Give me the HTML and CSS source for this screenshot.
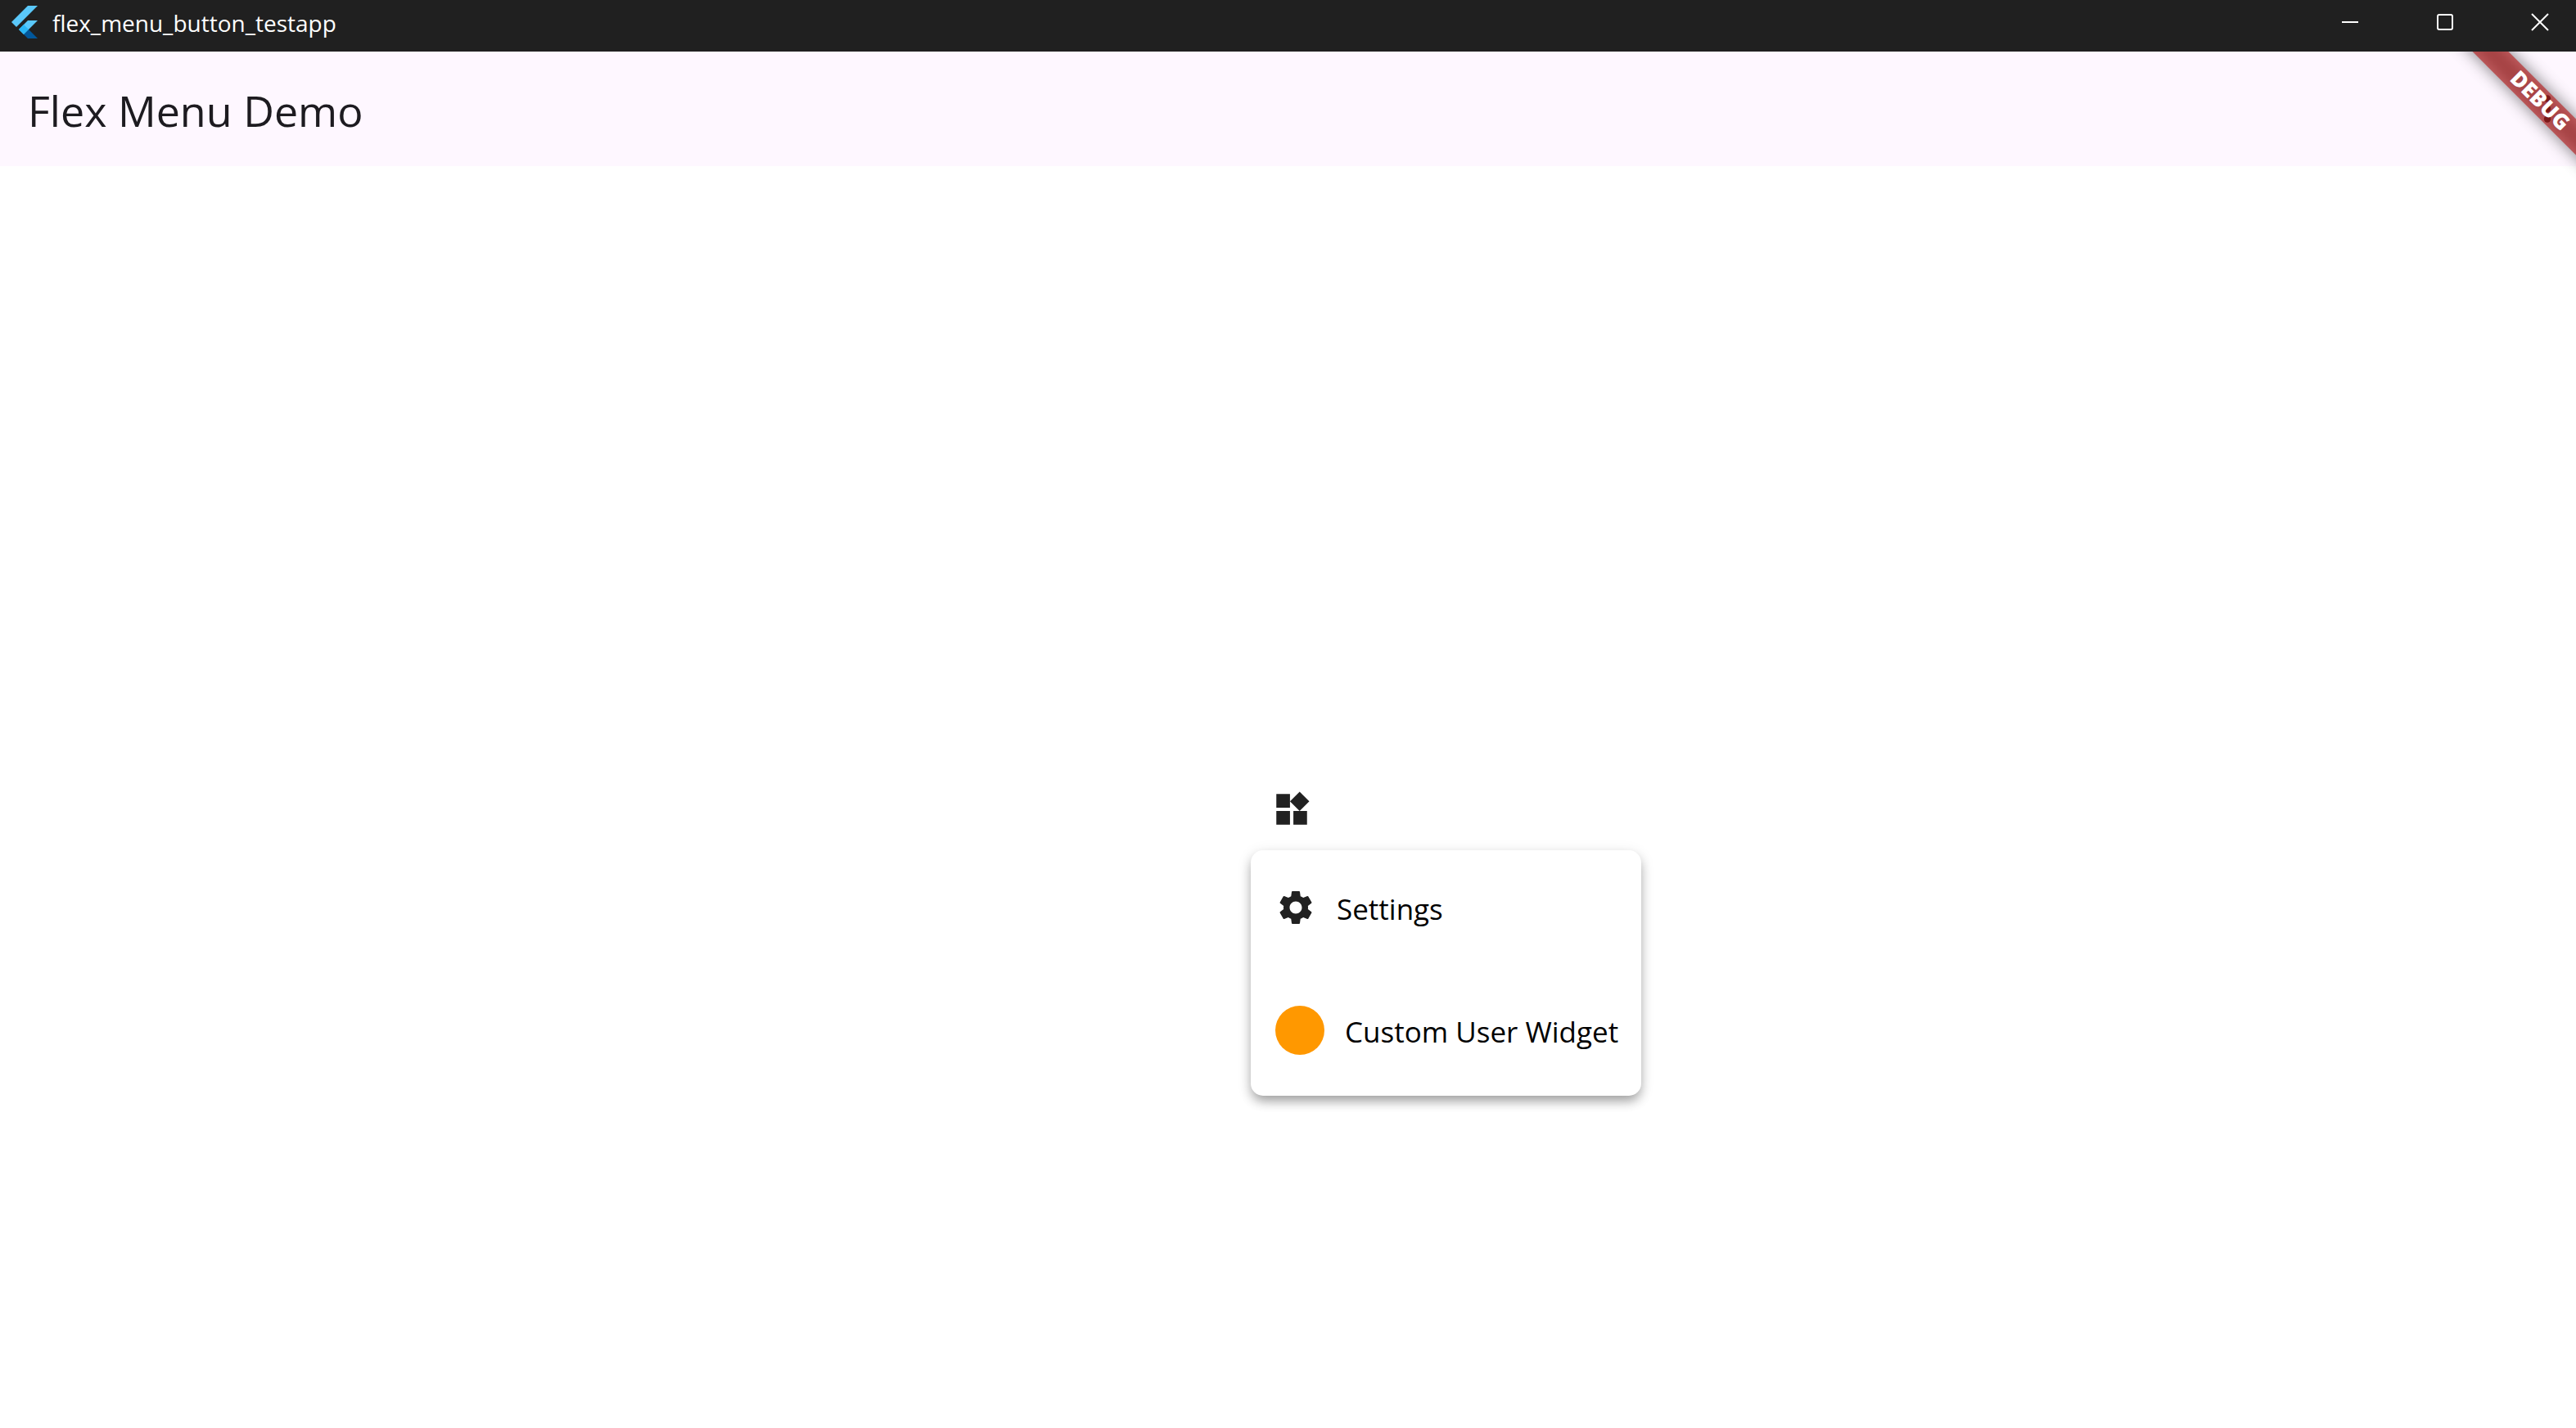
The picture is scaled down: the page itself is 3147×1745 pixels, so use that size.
FILE: index.html
```html
<!DOCTYPE html>
<html lang="en">
<head>
<meta charset="utf-8">
<title>flex_menu_button_testapp</title>
<link rel="stylesheet" href="styles.css">
</head>
<body>
<header class="titlebar">
  <svg class="logo" viewBox="0 0 32 40" aria-hidden="true">
    <path fill="#5ac8fa" d="M20 0H32L6 26L0 20Z"/>
    <path fill="#5ac8fa" d="M20 18H32L15 35L9 29Z"/>
    <path fill="#01579b" d="M15 35L21 29L32 40H20Z"/>
    <path fill="#29b6f6" d="M9 29L15 23L21 29L15 35Z"/>
  </svg>
  <span class="window-title">flex_menu_button_testapp</span>
  <div class="window-controls">
    <button class="window-button" type="button" aria-label="Minimize"><svg viewBox="0 0 20 20"><path d="M0 10H20"/></svg></button>
    <button class="window-button" type="button" aria-label="Maximize"><svg viewBox="0 0 20 20"><rect x="1" y="1" width="18" height="18" rx="2"/></svg></button>
    <button class="window-button" type="button" aria-label="Close"><svg viewBox="0 0 20 20"><path d="M0 0L20 20M20 0L0 20"/></svg></button>
  </div>
</header>
<div class="app">
  <header class="appbar">
    <h1 class="app-title">Flex Menu Demo</h1>
    <button class="more-button" type="button" aria-label="More options">
      <svg class="icon" viewBox="0 0 24 24"><circle cx="12" cy="6" r="2"/><circle cx="12" cy="12" r="2"/><circle cx="12" cy="18" r="2"/></svg>
    </button>
  </header>
  <main class="content">
    <div class="menu-anchor">
      <button class="menu-button" type="button" aria-label="Open menu" aria-expanded="true">
        <svg class="icon" viewBox="0 0 24 24"><path d="M13 13v8h8v-8h-8zM3 21h8v-8H3v8zM3 3v8h8V3H3zm13.66-1.31L11 7.34 16.66 13l5.66-5.66-5.66-5.65z"/></svg>
      </button>
      <div class="menu" role="menu">
        <button class="menu-item" type="button" role="menuitem">
          <svg class="icon" viewBox="0 0 24 24"><path d="M19.14 12.94c.04-.3.06-.61.06-.94 0-.32-.02-.64-.07-.94l2.03-1.58c.18-.14.23-.41.12-.61l-1.920-3.320c-.12-.22-.37-.29-.59-.22l-2.390.96c-.5-.38-1.030-.7-1.620-.94l-.36-2.540c-.04-.24-.24-.41-.48-.41h-3.840c-.24 0-.43.17-.47.41l-.36 2.540c-.59.24-1.130.57-1.620.94l-2.390-.96c-.22-.08-.47 0-.59.22L2.740 8.870c-.12.21-.08.47.12.61l2.030 1.580c-.05.3-.09.63-.09.94s.02.64.07.94l-2.030 1.580c-.18.14-.23.41-.12.61l1.920 3.320c.12.22.37.29.59.22l2.390-.96c.5.38 1.030.7 1.620.94l.36 2.540c.05.24.24.41.48.41h3.840c.24 0 .44-.17.47-.41l.36-2.540c.59-.24 1.130-.56 1.620-.94l2.390.96c.22.08.47 0 .59-.22l1.920-3.320c.12-.22.07-.47-.12-.61l-2.010-1.580zM12 15.600c-1.980 0-3.600-1.620-3.600-3.600s1.620-3.600 3.600-3.600 3.600 1.620 3.600 3.600-1.620 3.600-3.600 3.600z"/></svg>
          <span>Settings</span>
        </button>
        <button class="menu-item" type="button" role="menuitem">
          <span class="avatar"></span>
          <span>Custom User Widget</span>
        </button>
      </div>
    </div>
  </main>
  <div class="debug-corner"><div class="debug-banner">DEBUG</div></div>
</div>
</body>
</html>
```
FILE: styles.css
```css
* { box-sizing: border-box; }
body {
  margin: 0;
  min-height: 100vh;
  display: flex;
  flex-direction: column;
  background: #fff;
  color: #000;
  font-family: "Open Sans", "Noto Sans", sans-serif;
}
button {
  border: 0;
  padding: 0;
  background: none;
  color: inherit;
  font: inherit;
}
.icon {
  display: block;
  width: 50px;
  height: 50px;
  fill: #212121;
}
.titlebar {
  display: flex;
  align-items: center;
  height: 63px;
  padding-left: 14px;
  background: #202020;
  color: #fff;
}
.logo { width: 32px; height: 40px; margin-bottom: 9px; }
.window-title {
  margin-left: 18px;
  padding-bottom: 7px;
  font-size: 28px;
  line-height: 40px;
}
.window-controls { display: flex; align-self: stretch; margin-left: auto; }
.window-button {
  display: flex;
  align-items: center;
  justify-content: center;
  width: 116px;
  padding: 0 0 9px 28px;
}
.window-button svg {
  width: 20px;
  height: 20px;
  overflow: visible;
  fill: none;
  stroke: #fff;
  stroke-width: 2;
}
.app {
  position: relative;
  flex: 1;
  display: flex;
  flex-direction: column;
}
.appbar {
  display: flex;
  align-items: center;
  justify-content: space-between;
  height: 140px;
  padding: 0 10px 0 34px;
  background: #fef7ff;
}
.app-title {
  margin: 0;
  padding-top: 3px;
  color: #1d1b20;
  font-size: 52px;
  font-weight: 400;
  line-height: 70px;
}
.content {
  display: flex;
  justify-content: center;
  align-items: flex-start;
  padding: 736px 0 0 9px;
}
.menu-anchor { position: relative; }
.menu-button {
  display: flex;
  align-items: center;
  justify-content: center;
  width: 100px;
  height: 100px;
}
.menu {
  position: absolute;
  top: 100%;
  left: 0;
  display: flex;
  flex-direction: column;
  border-radius: 15px;
  background: #fff;
  box-shadow: 0 8px 14px -2px rgba(0, 0, 0, .32), 0 4px 18px rgba(0, 0, 0, .12);
}
.menu-item {
  display: flex;
  align-items: center;
  gap: 25px;
  height: 150px;
  padding: 0 28px 10px 30px;
  font-size: 35px;
  line-height: 50px;
  white-space: nowrap;
}
.menu-item span:last-child { padding-top: 3px; }
.avatar {
  width: 60px;
  height: 60px;
  border-radius: 50%;
  background: #ff9800;
}
.debug-corner {
  position: absolute;
  top: 0;
  right: 0;
  width: 200px;
  height: 200px;
  overflow: hidden;
  pointer-events: none;
}
.debug-banner {
  position: absolute;
  top: 37px;
  right: -88px;
  width: 280px;
  height: 31px;
  padding-left: 22px;
  transform: rotate(45deg);
  color: #fff;
  font-family: "Noto Sans", "Open Sans", sans-serif;
  font-size: 26px;
  font-weight: 900;
  line-height: 29px;
  text-align: center;
}
.debug-banner::before,
.debug-banner::after {
  content: "";
  position: absolute;
  inset: 0;
  z-index: -1;
}
.debug-banner::before {
  background: rgba(0, 0, 0, .5);
  filter: blur(10px);
}
.debug-banner::after { background: rgba(183, 28, 28, .63); }
```
